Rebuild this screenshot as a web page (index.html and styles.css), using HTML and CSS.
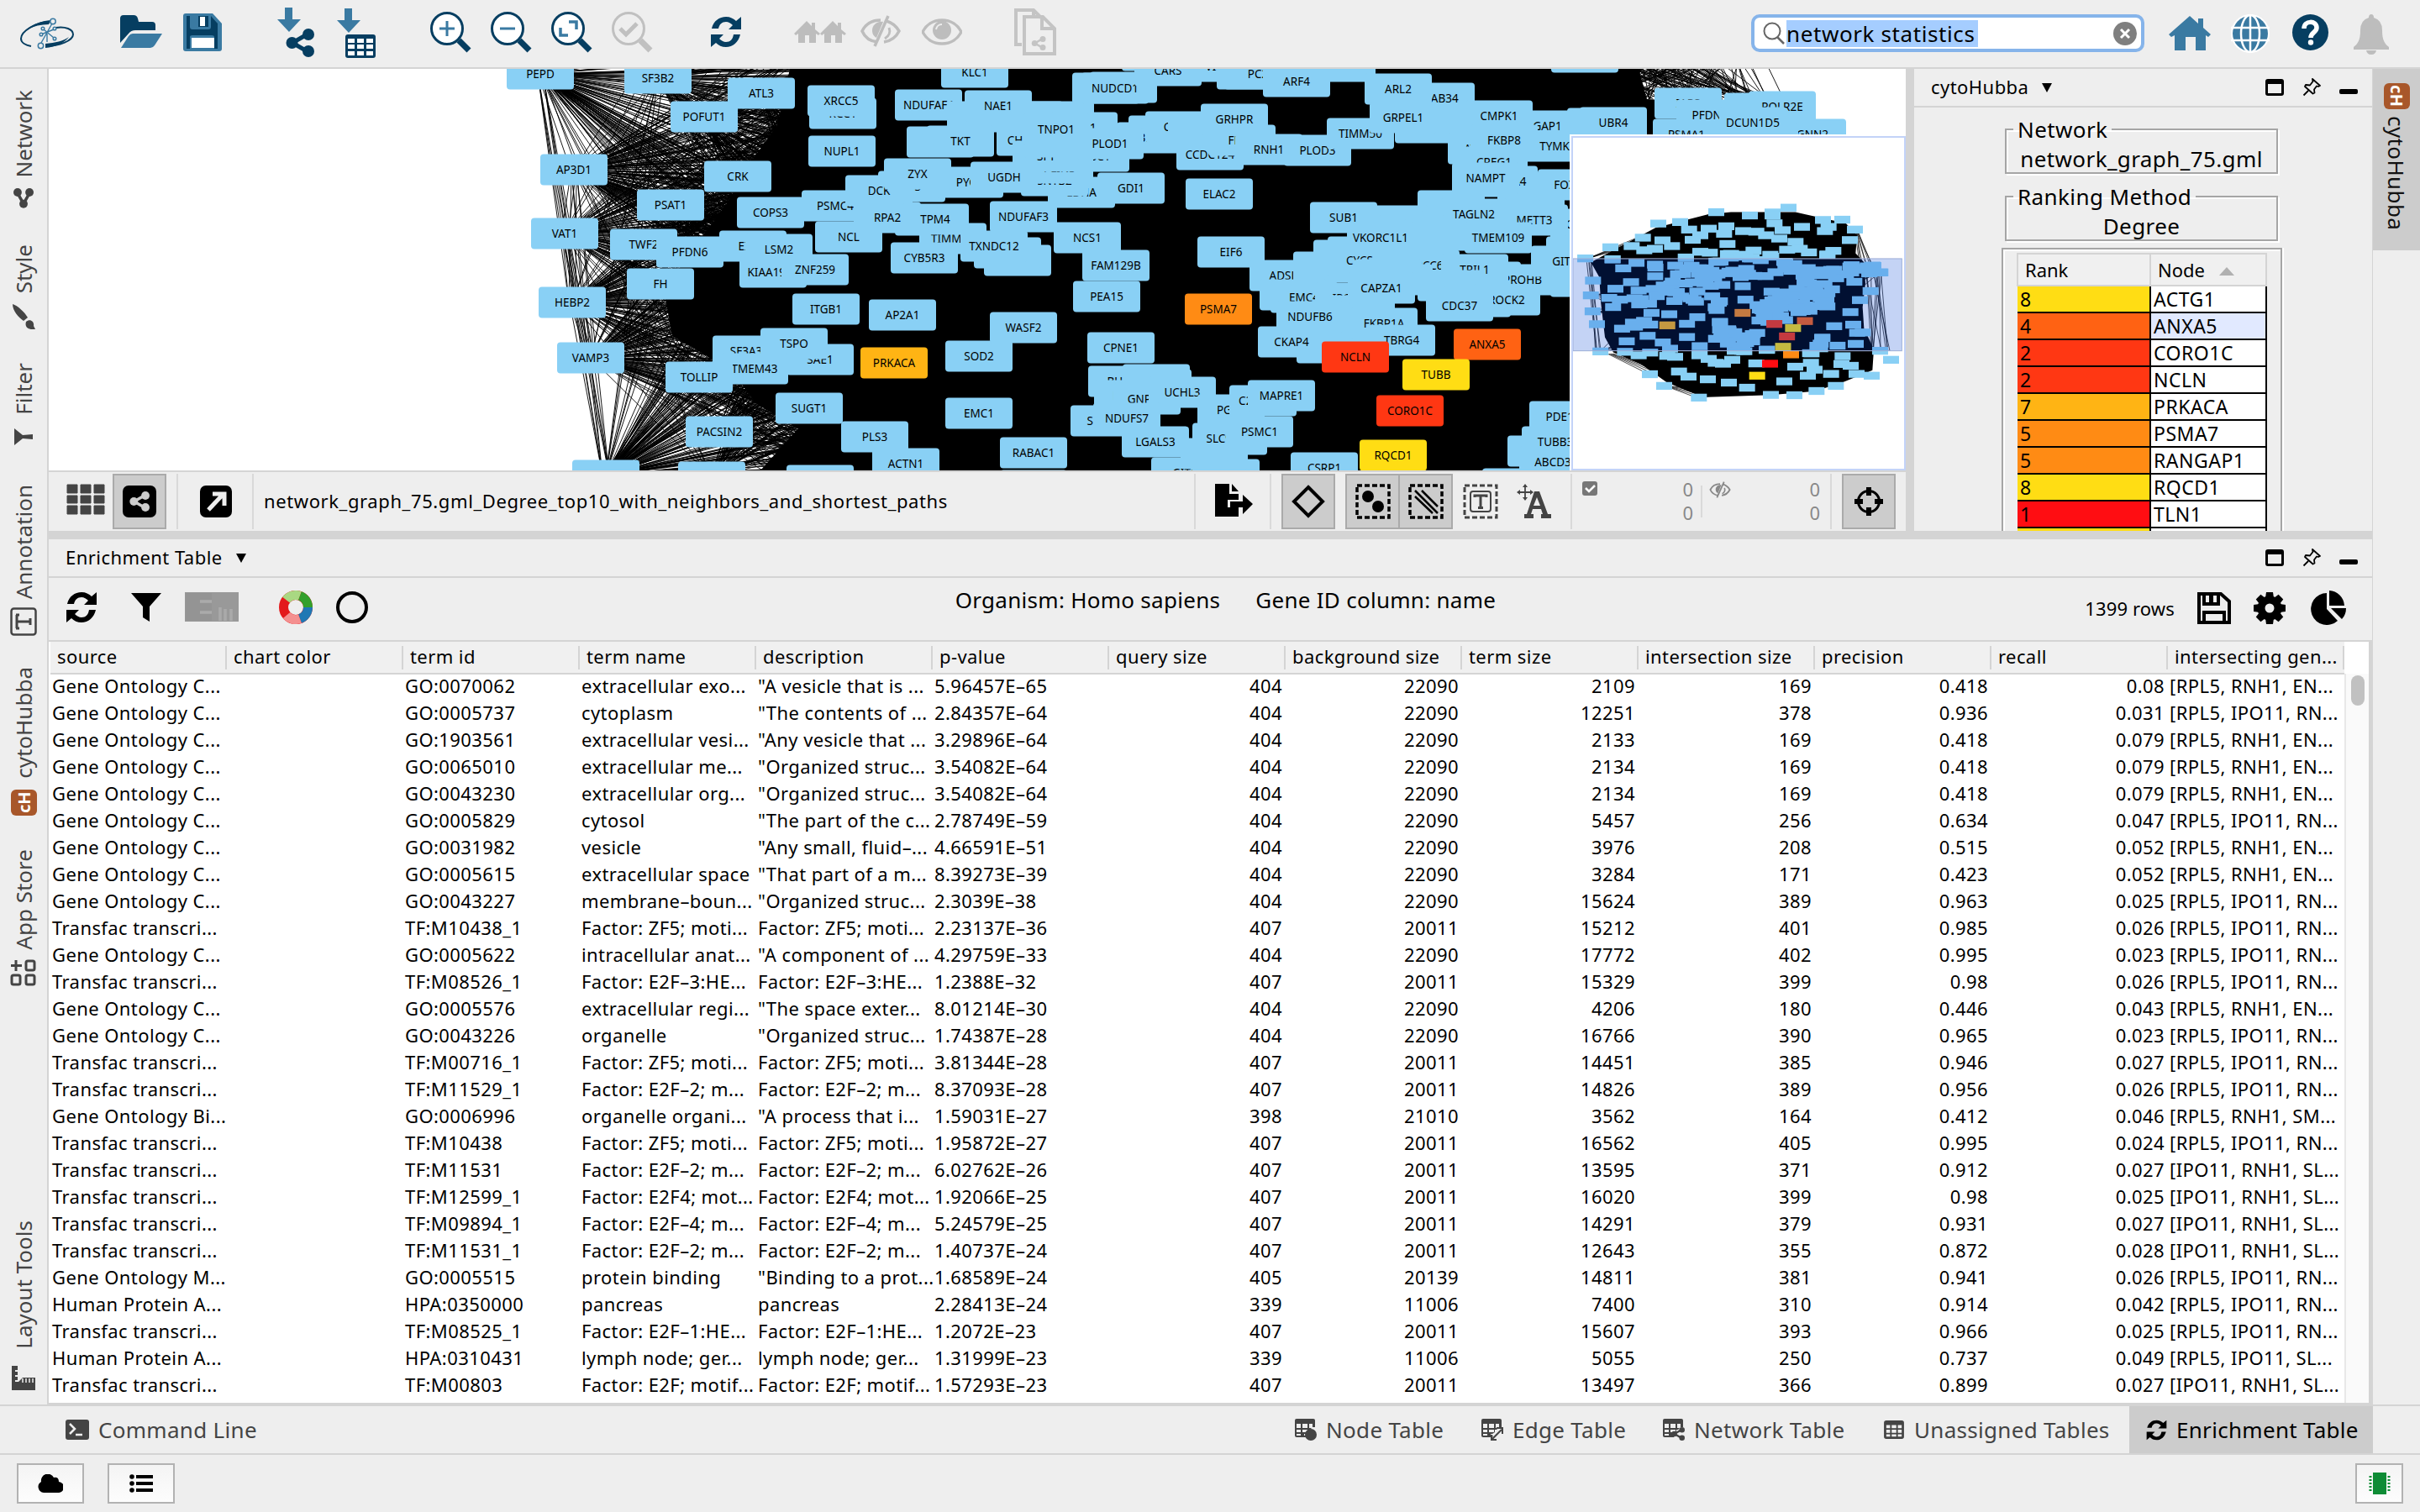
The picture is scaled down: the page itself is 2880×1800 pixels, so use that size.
FILE: index.html
```html
<!DOCTYPE html>
<html lang="en">
<head>
<meta charset="utf-8">
<title>Cytoscape session</title>
<link rel="stylesheet" href="styles.css">
</head>
<body>
<svg class="defs" width="0" height="0">
  <symbol id="i-refresh" viewBox="0 0 38 38"><path d="M2 15C4 6 11 1 19 1c5 0 9 2 12 5l6-5v15H22l5-5c-2-2-5-4-8-4-5 0-8 3-9 8zM36 22c-2 9-9 15-17 15-5 0-9-2-12-5l-6 5V22h15l-5 5c2 2 5 4 8 4 5 0 8-3 9-9z"/></symbol>
  <symbol id="i-eye" viewBox="0 0 48 32"><path d="M24 2C13 2 5 8 1 16c4 8 12 14 23 14s19-6 23-14C43 8 35 2 24 2z" fill="none" stroke="currentColor" stroke-width="3.5"/><circle cx="24" cy="14" r="11"/><path d="M17 13a7 7 0 0 1 7-6" fill="none" stroke="#eee" stroke-width="2"/></symbol>
  <symbol id="i-eyeoff" viewBox="0 0 48 38"><path d="M20 32C11 31 5 26 2 19 6 11 14 6 24 6M31 7c7 2 12 7 15 12-4 8-11 12-18 13" fill="none" stroke="currentColor" stroke-width="3.5"/><path d="M27 8c-7-1-13 4-13 10 0 5 2 7 5 9z"/><path d="M33 1 17 37" stroke="currentColor" stroke-width="3.5"/><path d="M29 28c5-3 7-8 5-13" fill="none" stroke="currentColor" stroke-width="3"/></symbol>
  <symbol id="i-share" viewBox="0 0 34 34"><path d="M27 6 8 17l19 11" fill="none" stroke="currentColor" stroke-width="5"/><circle cx="27" cy="7" r="7"/><circle cx="7.500" cy="17" r="7"/><circle cx="27" cy="27" r="7"/></symbol>
  <symbol id="i-max" viewBox="0 0 22 20"><path d="M3 0h16q3 0 3 3v14q0 3-3 3H3q-3 0-3-3V3q0-3 3-3zM3 6v11h16V6z" fill-rule="evenodd"/></symbol>
  <symbol id="i-pin" viewBox="0 0 22 22"><path d="M12 1l9 8-2 1-2-.5-3 4 .5 4-2 1L3 10l1-2 5 .5 3.500-4.500zM7 15 1.500 20.500" fill="none" stroke="currentColor" stroke-width="1.800" stroke-linejoin="round"/></symbol>
  <symbol id="i-table" viewBox="0 0 26 24"><path fill-rule="evenodd" d="M3 0h20q3 0 3 3v18q0 3-3 3H3q-3 0-3-3V3q0-3 3-3zM3 6v4h5V6zm7 0v4h6V6zm8 0v4h5V6zM3 12v4h5v-4zm7 0v4h6v-4zm8 0v4h5v-4zM3 18v3h5v-3zm7 0v3h6v-3zm8 0v3h5v-3z"/></symbol>
  <symbol id="i-grid" viewBox="0 0 26 26"><path d="M2 0h20q2 0 2 2v8h-3V6h-4v5h3l-2 2h-2v3l-3 2h-2v2h3l-1 2H2q-2 0-2-2V2q0-2 2-2zM2 6v5h5V6zm7 0v5h6V6zM2 13v3h5v-3zm7 0v3h6v-3zM2 18v2h5v-2z" fill-rule="evenodd"/></symbol>
</svg>

<div class="app">
  <header class="toolbar">
    <svg width="110" height="80" viewBox="0 0 110 80"><path d="M60 25C42 27 25 37 25 46c0 5 6 8 12 9" fill="none" stroke="#063e61" stroke-width="2"/><path d="M32 35C40 28 50 25 60 25l-2 4c-9 0-18 2-26 6z" fill="#063e61"/><path d="M66 33c12-2 21 2 21 8 0 7-16 14-33 14" fill="none" stroke="#063e61" stroke-width="2"/><path d="M54 52c12-1 21-3 28-8-5 7-16 12-28 13z" fill="#063e61"/><path d="M62 28 49 51M52 35l12 10M64 35l-15 6M56 40v10" stroke="#3a7aa2" stroke-width="1.400"/><g fill="#eee" stroke="#3a7aa2" stroke-width="1.500"><circle cx="63" cy="25.500" r="3.200"/><circle cx="48.500" cy="54.500" r="3.200"/><circle cx="51" cy="34" r="1.800"/><circle cx="65" cy="34" r="1.800"/><circle cx="65" cy="46" r="1.800"/><circle cx="49" cy="41" r="1.800"/></g></svg>
    <svg width="90" height="80" viewBox="110 0 90 80"><path d="M143 51V22q0-4 4-4h12q4 0 5 4l1 4h16q4 0 4 4v6h-24q-5 0-8 4z" fill="#063e61"/><path d="M144 57l9-14q2-3 5-3h35l-9 14q-2 3-5 3z" fill="#3a7aa2"/></svg>
    <svg width="90" height="80" viewBox="200 0 90 80"><path d="M221 16h32l11 12v30q0 3-3 3h-40q-3 0-3-3V19q0-3 3-3z" fill="#3a7aa2"/><path d="M222 19h4v13q0 3 3 3h19q3 0 3-3V19l8 9v30h-4V44q0-2-3-2h-23q-3 0-3 2v14h-4z" fill="#063e61"/><path d="M236 19h12v13h-12z" fill="#063e61"/><path d="M238 20h6v11h-6zM228 45h27v12h-27z" fill="#fff"/></svg>
    <svg width="95" height="80" viewBox="290 0 95 80"><path d="M339 9h9v14h10l-14 15-14-15h9z" fill="#3a7aa2"/><use href="#i-share" x="340" y="34" width="34" height="34" fill="#063e61" color="#063e61"/></svg>
    <svg width="115" height="80" viewBox="385 0 115 80"><path d="M410 10h9v14h10l-14 15-14-15h9z" fill="#3a7aa2"/><path fill="#063e61" d="M414 41h30q3 0 3 3v22q0 3-3 3h-30q-3 0-3-3V44q0-3 3-3z"/><path fill="#fff" d="M414 46h8v5h-8zm11 0h8v5h-8zm11 0h8v5h-8zM414 53h8v5h-8zm11 0h8v5h-8zm11 0h8v5h-8zM414 61h8v5h-8zm11 0h8v5h-8zm11 0h8v5h-8z"/></svg>
    <svg width="72" height="80" viewBox="500 0 72 80"><g fill="none" stroke="#063e61"><path d="M546 48l12 12" stroke-width="7"/><circle cx="532" cy="34" r="18.500" stroke-width="3" fill="#fff"/></g><path d="M532 25v18M523 34h18" stroke="#3a7aa2" stroke-width="3"/></svg>
    <svg width="72" height="80" viewBox="572 0 72 80"><g fill="none" stroke="#063e61"><path d="M618 48l12 12" stroke-width="7"/><circle cx="604" cy="34" r="18.500" stroke-width="3" fill="#fff"/></g><path d="M595 34h18" stroke="#3a7aa2" stroke-width="3"/></svg>
    <svg width="72" height="80" viewBox="644 0 72 80"><g fill="none" stroke="#063e61"><path d="M690 48l12 12" stroke-width="7"/><circle cx="676" cy="34" r="18.500" stroke-width="3" fill="#fff"/></g><path d="M677 26h9v9M667 33v9h9" fill="none" stroke="#3a7aa2" stroke-width="3.500"/></svg>
    <svg width="84" height="80" viewBox="716 0 84 80"><g fill="none" stroke="#c0c0c0"><path d="M762 48l12 12" stroke-width="7"/><circle cx="748" cy="34" r="18.500" stroke-width="3"/><path d="M738 34l7 7 13-13" stroke-width="5"/></g></svg>
    <svg width="130" height="80" viewBox="800 0 130 80"><use href="#i-refresh" x="845" y="19" width="38" height="38" fill="#063e61"/></svg>
    <svg width="85" height="80" viewBox="930 0 85 80"><path fill="#bdbdbd" d="M945 40l15-15 6 6v-4h4v8l6 5-2 2-3-2v11h-8v-9h-5v9h-8V40l-3 2zM976 40l15-15 6 6v-4h4v8l6 5-2 2-3-2v11h-8v-9h-5v9h-8V40l-3 2z"/></svg>
    <svg width="69" height="80" viewBox="1015 0 69 80"><use href="#i-eyeoff" x="1024" y="18" width="48" height="38" fill="#bdbdbd" color="#bdbdbd"/></svg>
    <svg width="76" height="80" viewBox="1084 0 76 80"><use href="#i-eye" x="1097" y="22" width="48" height="32" fill="#bdbdbd" color="#bdbdbd"/></svg>
    <svg width="120" height="80" viewBox="1160 0 120 80"><g fill="none" stroke="#c4c4c4" stroke-width="4"><path d="M1216 53h-7V12h21l9 9M1219 20h22l14 14v30h-36z"/><path d="M1230 12v7M1240 20v14h14"/></g><use href="#i-share" x="1227" y="43" width="18" height="17" fill="#c4c4c4" color="#c4c4c4"/></svg>
    <div class="search">
      <svg width="28" height="30" viewBox="0 0 28 30"><circle cx="12" cy="12" r="9.500" fill="none" stroke="#666" stroke-width="2"/><path d="M18 19l8 8" stroke="#666" stroke-width="2.500"/></svg>
      <span class="search-text">network statistics</span>
      <svg class="clear" width="28" height="28" viewBox="0 0 28 28"><circle cx="14" cy="14" r="14" fill="#7f7f7f"/><path d="M9 9l10 10M19 9 9 19" stroke="#fff" stroke-width="3"/></svg>
    </div>
    <svg width="90" height="80" viewBox="2560 0 90 80"><path fill="#3a7aa2" d="M2581 41l25-22 10 9v-6h6v11l9 8-3 3-3-2v18h-12V44h-12v16h-13V42l-4 2z"/></svg>
    <svg width="65" height="80" viewBox="2650 0 65 80"><circle cx="2678" cy="40" r="23" fill="#fff"/><circle cx="2678" cy="40" r="21" fill="#3a7aa2"/><path d="M2655 33h46M2655 48h46M2678 17v46" stroke="#fff" stroke-width="2.500"/><ellipse cx="2678" cy="40" rx="11" ry="22" fill="none" stroke="#fff" stroke-width="2.500"/></svg>
    <svg width="70" height="80" viewBox="2715 0 70 80"><circle cx="2749.500" cy="38.500" r="21.500" fill="#063e61"/><path d="M2742 34c0-10 15-10 15-1 0 6-7 5-7 12" fill="none" stroke="#fff" stroke-width="5.500"/><circle cx="2750" cy="50.500" r="3.200" fill="#fff"/></svg>
    <svg width="90" height="80" viewBox="2785 0 90 80"><path fill="#bdbdbd" d="M2822 17q3 0 3 4 10 3 10 15c0 12 3 16 8 20v3h-42v-3c5-4 8-8 8-20q0-12 10-15 0-4 3-4zM2816 60h12q-1 5-6 5t-6-5z"/></svg>
  </header>

  <div class="body">
    <nav class="side left">
      <div class="vtab t1"><span>Network</span><svg width="24" height="24" fill="#444" color="#444"><use href="#i-share" width="24" height="24" transform="rotate(-90 12 12)"/></svg></div>
      <div class="vtab t2"><span>Style</span><svg width="30" height="30" viewBox="0 0 30 30" fill="#444"><path d="M2 0c6 2 14 9 18 16l-5 4C9 16 2 8 2 0zM18 21c5-4 10 0 9 5l2 4c-8 1-13-2-11-9z"/></svg></div>
      <div class="vtab t3"><span>Filter</span><svg width="24" height="22" viewBox="0 0 24 22" fill="#444"><path d="M1 1v20l10-8 12 1v-6l-12 1z"/></svg></div>
      <div class="vtab t4"><span>Annotation</span><svg width="32" height="34" viewBox="0 0 32 34" fill="none" stroke="#444"><rect x="1.500" y="1.500" width="29" height="31" rx="3" stroke-width="2.500"/><path d="M7 17h18M8 9v16M24 13v8M7 9h4M7 25h4" stroke-width="3"/></svg></div>
      <div class="vtab t5"><span>cytoHubba</span><b class="ch">cH</b></div>
      <div class="vtab t6"><span>App Store</span><svg width="32" height="32" viewBox="0 0 32 32" fill="none" stroke="#444" stroke-width="3"><rect x="2" y="19" width="10" height="11" rx="2"/><rect x="19" y="19" width="10" height="11" rx="2"/><rect x="19" y="2" width="10" height="11" rx="2"/><path d="M7 1v13M1 7.500h13"/></svg></div>
      <div class="vtab t7"><span>Layout Tools</span><svg width="28" height="30" viewBox="0 0 28 30" fill="#444"><path d="M0 1h7v5H4v2h3v4H4v2h3v4H4v2h4l5-5h15v15H0z"/><path d="M13 16v5M17 16v5M21 16v5M25 16v5" stroke="#eee" stroke-width="1.500"/></svg></div>
    </nav>

    <main class="center">
      <div class="upper">
        <section class="netview">
          <div class="canvas">
            <svg id="network" width="2210" height="478" viewBox="58 82 2210 478"></svg>
            <div class="overview"><svg id="overview" width="394" height="394" viewBox="36 235 1182 1103" preserveAspectRatio="none"></svg></div>
          </div>
          <div class="netbar">
            <svg width="76" height="70" viewBox="58 562 76 70" fill="#444"><path d="M80 577h12v10H80zm16 0h12v10H96zm16 0h12v10h-12zM80 590h12v9H80zm16 0h12v9H96zm16 0h12v9h-12zM80 602h12v10H80zm16 0h12v10H96zm16 0h12v10h-12z" stroke="#444" stroke-linejoin="round"/></svg>
            <div class="btn on w64"><svg width="40" height="38" viewBox="0 0 40 38"><rect width="40" height="38" rx="7"/><use href="#i-share" x="8" y="7" width="24" height="24" fill="#ccc" color="#ccc"/></svg></div>
            <i class="sep l12"></i>
            <svg class="l26" width="38" height="38" viewBox="0 0 38 38"><rect width="38" height="38" rx="7"/><path d="M10 29 26 12M15 10h14v14" fill="none" stroke="#eee" stroke-width="5"/></svg>
            <i class="sep l24"></i>
            <span class="netname">network_graph_75.gml_Degree_top10_with_neighbors_and_shortest_paths</span>
            <i class="sep push"></i>
            <svg width="88" height="70" viewBox="1424 562 88 70"><path d="M1447 576h17v12h11v7h-13v9h13v11h-28zM1467 576l8 9h-8zM1465 597h15v-8l12 11-12 12v-8h-15z"/></svg>
            <i class="sep"></i>
            <div class="btn on w64 l12"><svg width="42" height="42" viewBox="0 0 42 42"><path d="M21 4 38 21 21 38 4 21z" fill="none" stroke="#000" stroke-width="4"/></svg></div>
            <div class="btn on w65 l12"><svg width="42" height="42" viewBox="0 0 42 42"><rect x="2" y="2" width="38" height="38" fill="none" stroke="#000" stroke-width="3.500" stroke-dasharray="6 3"/><circle cx="15" cy="15" r="7"/><circle cx="27" cy="27" r="7"/></svg></div>
            <div class="btn on w65 join"><svg width="42" height="42" viewBox="0 0 42 42"><rect x="2" y="2" width="38" height="38" fill="none" stroke="#000" stroke-width="3.500" stroke-dasharray="6 3"/><path d="M8 15l21 20M8 8l27 27M16 8l19 19" stroke="#000" stroke-width="2.500"/></svg></div>
            <svg class="l12" width="42" height="42" viewBox="0 0 42 42" fill="none" stroke="#444"><rect x="2" y="2" width="38" height="38" stroke-width="3" stroke-dasharray="6 3"/><rect x="9" y="9" width="24" height="24" rx="3" stroke-width="2"/><path d="M14 16v-2h14v2M21 14v14M18 28.500h6" stroke-width="3"/></svg>
            <svg class="l22" width="44" height="42" viewBox="0 0 44 42" fill="#444"><path fill-rule="evenodd" d="M21 9h6l10 27h4v5H29v-5h2l-2-6H19l-2 6h3v5H9v-5h3zM24 16l-4 10h8z"/><path d="M10 1v18M1 10h18" stroke="#444" stroke-width="1.800"/><path d="M10 0l3 4H7zM10 20l3-4H7zM0 10l4-3v6zM20 10l-4-3v6z"/></svg>
            <i class="sep l20"></i>
            <div class="counts c1"><svg width="18" height="18" viewBox="0 0 18 18"><rect width="18" height="17" rx="3" fill="#777"/><path d="M4 8l4 4 7-7" fill="none" stroke="#fff" stroke-width="2.500"/></svg><span>0<br>0</span></div>
            <i class="sep short"></i>
            <div class="counts c2"><svg width="26" height="20" fill="#888" color="#888"><use href="#i-eyeoff" width="26" height="20"/></svg><span>0<br>0</span></div>
            <i class="sep l12"></i>
            <div class="btn on w64 locate"><svg width="36" height="36" viewBox="0 0 36 36" fill="none" stroke="#000"><circle cx="18" cy="18" r="12.500" stroke-width="3"/><path d="M18 1v10M18 25v10M1 18h10M25 18h10" stroke-width="6"/></svg></div>
          </div>
        </section>

        <aside class="hub">
          <div class="phead"><span>cytoHubba</span><i class="tri"></i>
            <svg class="push" width="22" height="20"><use href="#i-max" width="22" height="20"/></svg><svg width="22" height="22"><use href="#i-pin" width="22" height="22"/></svg><i class="min"></i></div>
          <fieldset class="f1"><legend>Network</legend>network_graph_75.gml</fieldset>
          <fieldset class="f2"><legend>Ranking Method</legend>Degree</fieldset>
          <div class="rankbox"><table class="rank">
            <thead><tr><th>Rank</th><th>Node <i class="up"></i></th></tr></thead>
            <tbody>
              <tr><td class="y">8</td><td>ACTG1</td></tr>
              <tr><td class="o4">4</td><td class="hov">ANXA5</td></tr>
              <tr><td class="r2">2</td><td>CORO1C</td></tr>
              <tr><td class="r2">2</td><td>NCLN</td></tr>
              <tr><td class="o7">7</td><td>PRKACA</td></tr>
              <tr><td class="o5">5</td><td>PSMA7</td></tr>
              <tr><td class="o5">5</td><td>RANGAP1</td></tr>
              <tr><td class="y">8</td><td>RQCD1</td></tr>
              <tr><td class="r1">1</td><td>TLN1</td></tr>
              <tr><td class="y"></td><td></td></tr>
            </tbody></table></div>
        </aside>
      </div>

      <section class="enrich">
        <div class="phead e"><span>Enrichment Table</span><i class="tri"></i>
          <svg class="push" width="22" height="20"><use href="#i-max" width="22" height="20"/></svg><svg width="22" height="22"><use href="#i-pin" width="22" height="22"/></svg><i class="min"></i></div>
        <div class="ebar">
          <div class="eicons">
            <svg width="38" height="38"><use href="#i-refresh" width="38" height="38"/></svg>
            <svg width="36" height="36" viewBox="0 0 36 36"><path d="M0 1h36L22 17v18l-8-5V17z"/></svg>
            <svg class="em" width="64" height="35" viewBox="0 0 64 35"><rect width="64" height="35" fill="#999"/><path d="M1 1h31v33H1z" fill="#949494"/><path d="M18 11h14M18 24h14M42 18v16M48 20v14M55 20v14" stroke="#aaa" stroke-width="3.500"/></svg>
            <svg class="donut" width="40" height="40" viewBox="0 0 40 40" fill="none" stroke-width="11"><circle cx="20" cy="20" r="14.500" stroke="#e31a1c"/><path d="M8.500 11.200A14.500 14.500 0 0 1 25 6.400" stroke="#a9d882"/><path d="M25 6.400A14.500 14.500 0 0 1 34.500 20" stroke="#33a02c"/><path d="M34.500 20A14.500 14.500 0 0 1 25 33.600" stroke="#1f78b4"/><path d="M25 33.600A14.500 14.500 0 0 1 9 29.500" stroke="#f48f8f"/></svg>
            <svg class="ring" width="38" height="38" viewBox="0 0 38 38"><circle cx="19" cy="19" r="17" fill="none" stroke="#000" stroke-width="4"/></svg>
          </div>
          <div class="etitle"><span>Organism: Homo sapiens</span><span>Gene ID column: name</span></div>
          <div class="eright"><span>1399 rows</span>
            <svg class="s1" width="40" height="38" viewBox="0 0 40 38"><path d="M2 2h26l10 9v25H2zM8 2v12h17V2M8 36V24h24v12" fill="none" stroke="#000" stroke-width="4"/><path d="M14 2h5v10h-5z"/></svg>
            <svg class="s2" width="38" height="38" viewBox="-19 -19 38 38"><circle r="10" fill="none" stroke="#000" stroke-width="9"/><g><path id="tooth" d="M-4-19h8l1 7H-5z"/><use href="#tooth" transform="rotate(45)"/><use href="#tooth" transform="rotate(90)"/><use href="#tooth" transform="rotate(135)"/><use href="#tooth" transform="rotate(180)"/><use href="#tooth" transform="rotate(225)"/><use href="#tooth" transform="rotate(270)"/><use href="#tooth" transform="rotate(315)"/></g></svg>
            <svg class="s3" width="44" height="41" viewBox="0 0 44 41"><path d="M20 3v19l13 14A19 19 0 1 1 20 3zM23 0a19 19 0 0 1 18 18H23zM25 21h18q0 8-5 13z"/></svg>
          </div>
        </div>
        <div class="grid">
          <table class="terms"><thead><tr><th>source</th><th>chart color</th><th>term id</th><th>term name</th><th>description</th><th>p-value</th><th>query size</th><th>background size</th><th>term size</th><th>intersection size</th><th>precision</th><th>recall</th><th>intersecting gen...</th></tr></thead><tbody id="rows"></tbody></table>
          <div class="scroll"><i></i></div>
        </div>
      </section>
    </main>

    <nav class="side right"><div class="rtab"><b class="ch">cH</b><span>cytoHubba</span></div></nav>
  </div>

  <footer class="tabs">
    <div class="tab cmd"><svg width="28" height="24" viewBox="0 0 28 24"><rect width="28" height="24" rx="3" fill="#444"/><path d="M5 5l6 6-6 6M12 18h8" fill="none" stroke="#eee" stroke-width="2.500"/></svg>Command Line</div>
    <div class="tab tn"><svg width="26" height="26" fill="#444"><use href="#i-grid" width="26" height="26"/><circle cx="19" cy="19" r="7"/></svg>Node Table</div>
    <div class="tab te"><svg width="26" height="26" fill="#444"><use href="#i-grid" width="26" height="26"/><path d="M13 24 24 13M18 11h7v7M12 19v6h6" stroke="#444" stroke-width="2" fill="none"/></svg>Edge Table</div>
    <div class="tab tw"><svg width="26" height="26" fill="#444" color="#444"><use href="#i-grid" width="26" height="26"/><use href="#i-share" x="10" y="10" width="16" height="16"/></svg>Network Table</div>
    <div class="tab tu"><svg width="26" height="22" fill="#444"><use href="#i-table" width="26" height="22"/></svg>Unassigned Tables</div>
    <div class="tab cur"><svg width="25" height="25"><use href="#i-refresh" width="25" height="25"/></svg>Enrichment Table</div>
  </footer>
  <div class="status">
    <div class="sbtn"><svg width="30" height="22" viewBox="0 0 30 22"><path d="M7 22a7 7 0 0 1-3-13A8 8 0 0 1 19 4q6-1 6 5a6.500 6.500 0 0 1-1 13z"/></svg></div>
    <div class="sbtn b2"><svg width="28" height="22" viewBox="0 0 28 22"><path d="M8 1h20v4H8zm0 8h20v4H8zm0 8h20v4H8z"/><circle cx="3" cy="3" r="2.800"/><circle cx="3" cy="11" r="2.800"/><circle cx="3" cy="19" r="2.800"/></svg></div>
    <div class="sbtn mem"><svg width="26" height="28" viewBox="0 0 26 28"><rect x="5" y="1" width="16" height="26" fill="#0e8c35"/><path d="M2 5v20M24 5v20" stroke="#0e8c35" stroke-width="3" stroke-dasharray="2 2"/></svg></div>
  </div>
</div>
<script src="app.js"></script>
</body>
</html>
```
FILE: styles.css
```css
* { box-sizing: border-box; }
body { margin: 0; background: #eee; color: #000; font: 22px/1 "Noto Sans", "Open Sans", sans-serif; }
svg { display: block; flex: none; }
.defs { position: absolute; }
.app { width: 2880px; height: 1800px; display: flex; flex-direction: column; overflow: hidden; white-space: nowrap; }
.push { margin-left: auto !important; }

/* main toolbar */
.toolbar { height: 82px; border-bottom: 2px solid #d4d4d4; display: flex; }
.search { margin: 17px 8px 0 804px; width: 468px; height: 45px; border: 4px solid #86b4ea; border-radius: 10px; background: #fff; display: flex; align-items: center; padding: 0 5px 0 9px; }
.search-text { background: #a5cdff; font-size: 26px; line-height: 32px; width: 228px; letter-spacing: .6px; margin-left: 1px; }
.search .clear { margin-left: auto; }

.body { height: 1592px; display: flex; }

/* vertical tabs */
.side { width: 58px; color: #444; font-size: 26px; }
.left { border-right: 2px solid #d4d4d4; display: flex; flex-direction: column; padding-top: 25px; }
.vtab { display: flex; flex-direction: column; justify-content: space-between; align-items: center; flex: none; }
.vtab span { writing-mode: vertical-rl; transform: rotate(180deg); line-height: 36px; }
.t1 { height: 141px; margin-bottom: 43px; } .t2 { height: 101px; margin-bottom: 40px; } .t3 { height: 99px; margin-bottom: 46px; }
.t4 { height: 180px; margin-bottom: 37px; } .t5 { height: 177px; margin-bottom: 40px; } .t6 { height: 163px; } .t7 { height: 202px; margin-top: 279px; }
.ch { background: #a8572a; color: #fff; width: 31px; height: 31px; border-radius: 6px; writing-mode: vertical-rl; font-size: 20px; line-height: 31px; text-align: center; }
.left .ch { transform: rotate(180deg); }
.right { width: 56px; }
.rtab { background: #ccc; height: 216px; display: flex; flex-direction: column; align-items: center; padding-top: 17px; gap: 8px; color: #111; letter-spacing: .4px; }
.rtab span { writing-mode: vertical-rl; line-height: 36px; }

.center { width: 2766px; display: flex; flex-direction: column; border-right: 1px solid #d4d4d4; }
.upper { height: 560px; display: flex; border-bottom: 10px solid #d4d4d4; }

/* network view */
.netview { width: 2220px; border-right: 10px solid #d4d4d4; }
.canvas { height: 480px; border-bottom: 2px solid #d4d4d4; background: #fff; position: relative; overflow: hidden; }
.overview { position: absolute; right: 0; bottom: 0; border: 2px solid #c3d3f8; outline: 2px solid #fff; background: #fff; }
#network text { font: 13.5px "Noto Sans", sans-serif; text-anchor: middle; }
.netbar { height: 70px; display: flex; align-items: center; }
.btn { height: 66px; display: flex; align-items: center; justify-content: center; background: #ccc; border: 2px solid #aaa; }
.w64 { width: 64px; } .w65 { width: 65px; } .join { margin-left: -2px; }
.locate { margin: 0 12px 0 12px; }
.sep { width: 2px; height: 66px; background: #d9d9d9; }
.sep.short { height: 38px; margin-left: 9px; }
.l12 { margin-left: 12px; } .l20 { margin-left: 20px; } .l22 { margin-left: 22px; } .l24 { margin-left: 24px; } .l26 { margin-left: 26px; }
.netname { margin: -3px 0 0 12px; letter-spacing: .6px; }
.counts { display: flex; justify-content: space-between; align-items: flex-start; color: #888; line-height: 28px; height: 59px; }
.counts svg { margin-top: 5px; }
.c1 { width: 132px; margin-left: 12px; } .c2 { width: 132px; margin-left: 8px; }

/* panels */
.phead { height: 46px; display: flex; align-items: center; border-bottom: 2px solid #d4d4d4; padding: 0 17px 0 20px; gap: 22px; letter-spacing: .45px; }
.phead span { margin-top: -2px; }
.tri { border: 6px solid transparent; border-top: 11px solid #000; border-bottom: 0; margin-left: -6px; }
.min { width: 22px; height: 6px; border-radius: 2px; background: #000; margin-top: 10px; }
.hub { width: 545px; overflow: hidden; }
.hub fieldset { margin: 0 0 0 108px; padding: 0; width: 325px; height: 70px; border: 2px solid #a5a5a5; box-shadow: inset 2px 2px #fff, 2px 2px #fff; font-size: 26px; line-height: 36px; text-align: center; letter-spacing: .4px; }
.hub legend { padding: 0 5px; margin-left: 8px; line-height: 34px; text-align: left; }
.hub .f1 { margin-top: 9px; } .hub .f2 { margin-top: 10px; }
.rankbox { margin: 8px 0 0 104px; width: 334px; height: 400px; border: 2px solid #a5a5a5; box-shadow: inset 2px 2px #fff, 2px 0 #fff; padding: 4px 0 0 16px; }
.rank { border-collapse: collapse; table-layout: fixed; width: 298px; }
.rank th { height: 38px; background: #f0f0f0; border: 2px solid #d4d4d4; font-weight: 400; text-align: left; padding: 0 0 1px 8px; }
.rank td { height: 32px; border: 2px solid #000; border-left: 0; background: #fff; padding: 0 0 0 3px; font-size: 23px; letter-spacing: .5px; }
.rank thead th:first-child { width: 158px; }
.rank tr:first-child td { border-top: 0; }
.up { display: inline-block; border: 9px solid transparent; border-bottom: 10px solid #b0b0b0; border-top: 0; margin: 0 0 2px 11px; }
.rank .y { background: #ffdd14; } .rank .o4 { background: #ff6213; } .rank .r2 { background: #ff3713; } .rank .o7 { background: #ffb414; } .rank .o5 { background: #ff8b14; } .rank .r1 { background: #ff0d12; } .rank .hov { background: #e1e9ff; }

/* enrichment table */
.enrich { flex: 1; display: flex; flex-direction: column; border-bottom: 4px solid #d4d4d4; }
.ebar { height: 76px; border-bottom: 2px solid #d4d4d4; display: grid; grid-template-columns: 1fr auto 1fr; align-items: center; }
.eicons { display: flex; align-items: center; padding-left: 20px; margin-top: -5px; }
.eicons svg + svg { margin-left: 40px; }
.eicons svg.em { margin-left: 28px; } .eicons svg.donut { margin-left: 48px; } .eicons svg.ring { margin-left: 28px; }
.etitle { display: flex; gap: 42px; font-size: 26px; margin: -22px 0 0 36px; letter-spacing: .28px; }
.eright { display: flex; align-items: center; justify-content: flex-end; padding-right: 30px; margin-top: -3px; letter-spacing: .15px; }
.eright .s1 { margin-left: 27px; } .eright .s2 { margin-left: 27px; } .eright .s3 { margin-left: 29px; }
.grid { display: flex; flex: 1; padding-left: 2px; background: #fff; border-right: 4px solid #d4d4d4; overflow: hidden; }
.terms { border-collapse: collapse; table-layout: fixed; width: 2730px; height: 0; font-size: 22px; letter-spacing: .42px; }
.terms th { font-weight: 400; text-align: left; padding: 0 0 3px 8px; height: 38px; background: linear-gradient(#d4d4d4, #d4d4d4) right center / 2px 28px no-repeat #f0f0f0; border-bottom: 2px solid #d4d4d4; }
.terms td { height: 32px; padding: 0 0 5px 2px; }
.terms .n { text-align: right; padding-right: 4px; }
.scroll { margin-top: 38px; flex: 1; background: #fafafa; border-left: 2px solid #e8e8e8; padding: 2px 0 0 6px; }
.scroll i { display: block; width: 16px; height: 36px; border-radius: 8px; background: #c1c1c1; }

/* bottom tabs and status bar */
.tabs { height: 60px; margin-top: -2px; border-top: 2px solid #d4d4d4; border-bottom: 2px solid #d4d4d4; display: flex; color: #444; font-size: 26px; letter-spacing: .3px; }
.tab { display: flex; align-items: center; gap: 11px; }
.cmd { margin-left: 78px; width: 1463px; } .tn { width: 222px; } .te { width: 216px; } .tw { width: 262px; } .tu { width: 293px; }
.cur { background: #ccc; color: #000; width: 290px; padding-left: 20px; }
.status { flex: 1; display: flex; padding: 10px 20px; }
.sbtn { width: 80px; height: 48px; border: 2px solid #b2b2b2; background: linear-gradient(#f4f4f4, #fdfdfd); display: flex; align-items: center; justify-content: center; }
.b2 { margin-left: 28px; }
.mem { width: 57px; margin-left: auto; }
```
FILE: app.js
```js
const LIGHT = '#89d0f5';

// Nodes in drawing order: x, y of the centre, label, fill. Later nodes cover earlier ones.
const nodes = [
[643,88,'PEPD'],[783,93,'SF3B2'],[906,111,'ATL3'],[838,139,'POFUT1'],[1003,135,'RCC1'],[1001,120,'XRCC5'],[1002,180,'NUPL1'],
[1160,86,'KLC1'],[1105,125,'NDUFAF4'],[1167,139,''],[1119,169,''],[1226,167,'CHCHD3'],[1143,168,'TKT'],[1262,139,''],[1225,139,''],[1188,126,'NAE1'],
[1290,152,'ISG1'],[1304,186,'UBC1'],[1287,229,'LDHA'],[1255,215,'SNTB2'],[1261,200,'PLIN3'],[1245,186,'SFT'],[1258,169,''],[1257,154,'TNPO1'],[1383,156,''],[1369,164,'UBE2L3'],[1321,171,'PLOD1'],
[683,202,'AP3D1'],[878,210,'CRK'],[798,244,'PSAT1'],[672,278,'VAT1'],[766,291,'TWF2'],[821,300,'PFDN6'],[896,293,'EIF3K'],[920,324,'KIAA1967'],[927,297,'LSM2'],[970,321,'ZNF259'],
[786,338,'FH'],[681,360,'HEBP2'],[983,368,'ITGB1'],[1074,375,'AP2A1'],[917,253,'COPS3'],[994,245,'PSMC4'],[1085,222,'ST3'],[1046,227,'DCK'],[1105,262,''],[1154,217,'PYGL'],[1195,211,'UGDH'],[1092,207,'ZYX'],
[1010,282,'NCL'],[1134,284,'TIMM44'],[1056,259,'RPA2'],[1113,261,'TPM4'],[1100,307,'CYB5R3'],[1211,310,'TARS'],[1199,301,''],[1218,258,'NDUFAF3'],[1183,293,'TXNDC12'],
[703,426,'VAMP3'],[888,418,'SF3A3'],[976,428,'SAE1'],[945,409,'TSPO'],[898,439,'TMEM43'],[832,449,'TOLLIP'],[1064,432,'PRKACA','#ffb414'],[1165,424,'SOD2'],[1218,390,'WASF2'],[963,486,'SUGT1'],[1165,492,'EMC1'],[856,514,'PACSIN2'],[1041,520,'PLS3'],[1078,552,'ACTN1'],[1230,578,''],[1230,539,'RABAC1'],[721,566,''],[847,568,''],[976,572,''],
[1346,224,'GDI1'],[1451,231,'ELAC2'],[1294,283,'NCS1'],[1328,316,'FAM129B'],[1317,353,'PEA15'],[1334,414,'CPNE1'],[1465,300,'EIF6'],[1450,368,'PSMA7','#ff8b14'],
[1316,105,''],[1337,104,''],[1327,105,'NUDCD1'],[1375,66,''],[1390,84,'CARS'],[1447,79,'VIM'],[1488,88,''],[1497,88,'PC2'],[1597,79,''],[1543,97,'ARF4'],
[1403,151,'CALM'],[1440,184,'CCDC124'],[1430,160,''],[1478,167,'FECH'],[1469,142,'GRHPR'],[1510,178,'RNH1'],[1568,179,'PLOD3'],
[1619,159,'TIMM50'],[1715,117,'RAB34'],[1664,106,'ARL2'],[1719,150,'KARS'],[1700,152,''],[1670,140,'GRPEL1'],
[1905,147,''],[1930,190,''],[1886,68,''],[1890,165,''],
[1763,177,'ATP5O'],[1834,150,'IQGAP1'],[1850,174,'TYMK'],[1784,138,'CMPK1'],[1778,193,'CREG1'],[1790,167,'FKBP8'],
[1822,238,''],[1790,216,'NDUFA4'],[1768,212,'NAMPT'],[1870,220,'FOXK1'],[1885,267,'COX5A'],[1727,245,''],[1826,262,'METT3'],[1754,255,'TAGLN2'],
[1599,259,'SUB1'],[1660,263,''],[1655,270,''],[1603,304,''],[1620,300,''],[1693,297,'CTTF'],[1680,275,''],[1710,280,''],[1643,283,'VKORC1L1'],[1880,300,''],[1885,335,''],[1770,330,''],
[1527,328,'ADSL'],[1579,318,''],[1618,310,'CYCS'],[1697,316,'XRCC6'],[1812,333,'PROHB'],[1862,311,'GIT2'],[1755,321,'TRIL1'],[1783,283,'TMEM109'],[1665,333,'ACSL1'],[1727,340,''],[1758,359,''],[1793,357,'ROCK2'],[1539,351,''],[1552,354,'EMC4'],[1605,355,'IPO11'],[1620,370,''],
[1583,414,''],[1605,398,''],[1647,385,'FKBP1A'],[1559,377,'NDUFB6'],[1652,327,''],[1644,343,'CAPZA1'],[1737,364,'CDC37'],[1668,405,'TBRG4'],[1537,407,'CKAP4'],
[1613,425,'NCLN','#ff3713'],[1770,410,'ANXA5','#ff6213'],[1709,446,'TUBB','#ffdd14'],[1678,489,'CORO1C','#ff3713'],[1576,557,'CSRP1'],[1658,542,'RQCD1','#ffdd14'],
[1335,454,'BUB3'],[1376,452,''],[1378,458,''],[1342,471,'EIF1B'],[1314,501,'SNX12'],[1365,475,'GNPDA'],[1407,467,'UCHL3'],[1341,498,'NDUFS7'],[1410,563,'GIT1'],[1375,526,'LGALS3'],[1459,565,'ERO1L'],[1445,540,''],[1468,523,''],[1465,488,'PGK1'],[1503,477,'C21orf33'],[1525,471,'MAPRE1'],[1459,522,'SLC9A3'],[1499,514,'PSMC1'],
[1804,576,''],[1860,496,'PDE12'],[1834,537,''],[1851,526,'TUBB3'],[1848,550,'ABCD3'],
[2009,123,'IARS'],[2092,129,''],[2121,127,'POLR2E'],[2007,160,'PSMA1'],[2035,137,'PFDN2'],[2157,160,'GNN2'],[2100,165,''],[2086,146,'DCUN1D5'],[1920,146,'UBR4']
];

// Nodes outside the main viewport, in overview units.
const outer = [[547,483],[667,494],[748,484],[748,494],[805,468],[340,521],[418,516],[928,509],[997,508],[1042,541],[1024,576],[755,520],[853,532],[948,532],[935,546],[784,543],[583,530],[520,538],[450,541],[575,555],[463,575],[490,560],[285,568],[169,600],[355,577],[389,596],[245,596],[328,605],[290,610],[587,589],[643,546],[690,548],[725,560],[772,571],[830,582],[800,608],[845,605],[878,617],[965,612],[943,625],[490,615],[524,618],[680,611],[600,622],[650,625],[740,625],[438,634],[177,640],
[555,648],[793,650],[1130,684],[1105,661],[1098,746],[1060,776],[1026,816],[968,863],[1036,858],[1050,885],[1070,884],[1045,922],[1132,945],[1010,690],[1040,715],[960,690],[925,902],[910,930],[980,928],[727,942],[1060,670],[1026,664],[960,740],[920,770],[560,850],[570,880],[600,900],[560,780],[545,800],
[270,960],[372,962],[400,965],[487,960],[520,972],[545,985],[604,975],[571,988],[690,987],[882,953],[998,963],[994,989],[1027,995],[1171,975],[829,998],[885,985],[898,1008],[874,1028],[957,1022],[1048,1022],[1102,1028],[310,1023],[361,1062],[414,1014],[448,1031],[517,1040],[592,1051],[657,1068],[790,1047],[742,1092],[826,1093],[905,1079],[974,1062],[485,1101],[640,945],
[739,988,'#ff0d12'],[693,1028,'#ffdd14'],[814,957,'#ff8b14']];

let seed = 7;
const rnd = () => (seed = (seed * 16807) % 2147483647) / 2147483647;
const line = (a, b, c, d) => `M${a.toFixed(1)} ${b.toFixed(1)}L${c.toFixed(1)} ${d.toFixed(1)}`;

function drawNetwork() {
  let d = '';
  // fans from the outermost nodes into the dense middle
  const hubs = [[643,88,130],[683,202,130],[672,278,110],[681,360,120],[703,426,120],[721,566,170],[783,93,90],[906,111,60],[838,139,70],[878,210,60],[798,244,60],[856,514,60],[832,449,70],[766,291,60],[847,568,70]];
  for (const [x, y, n] of hubs)
    for (let i = 0; i < n; i++) d += line(x + rnd() * 6 - 3, y, 1000 + rnd() * 350, -60 + rnd() * 720);
  // edges along the left rim
  const rim = [[643,88],[683,202],[672,278],[681,360],[703,426],[721,566]];
  for (const a of rim) for (const b of rim) if (a[1] < b[1])
    for (let k = -1; k < 2; k += 2) d += line(a[0] + k * 3, a[1], b[0] + k * 4, b[1]);
  for (const a of rim) for (const b of [[783,93],[838,139],[798,244],[766,291],[786,338],[832,449],[856,514],[847,568],[878,210],[900,20],[800,20]])
    d += line(a[0], a[1], b[0], b[1]);
  // edges leaving through the top right
  for (let i = 0; i < 130; i++) d += line(1880 + rnd() * 230, 118, 1820 + rnd() * 260, 60);
  for (let i = 0; i < 14; i++) d += line(2050 + rnd() * 80, 118, 1960 + rnd() * 130, 50);
  let s = '<path fill="#000" d="M940 82L925 150L895 190L870 235L830 290L790 345L800 400L870 440L900 480L950 510L905 560H1880V165H2080V125L1960 118L1950 82z"/>';
  s += `<path d="${d}" stroke="#000" stroke-width=".9" fill="none"/>`;
  for (const [x, y, t, f] of nodes) {
    s += `<rect x="${x - 40}" y="${y - 18.5}" width="80" height="37" rx="4" fill="${f || LIGHT}"/>`;
    if (t) s += `<text x="${x}" y="${y + 5}">${t}</text>`;
  }
  document.getElementById('network').innerHTML = s;
}

function drawOverview() {
  const box = (x, y, f) => `<rect x="${x - 28}" y="${y - 13}" width="57" height="26" fill="${f || LIGHT}"/>`;
  let d = '';
  const rim = [[79,637],[107,711],[100,760],[107,813],[121,857],[133,947],[169,600],[285,568],[310,1023],[361,1062],[485,1101],[1130,684],[1132,945],[1102,1028],[974,1062],[1042,541],[997,508],[340,521],[547,483]];
  for (const [x, y] of rim) for (let i = 0; i < 5; i++) d += line(x, y, 350 + rnd() * 550, 680 + rnd() * 220);
  for (let i = 0; i < 12; i++) d += line(1080 + rnd() * 60, 690, 1100 + rnd() * 68, 945);
  for (let i = 0; i < 8; i++) d += line(1042 + rnd() * 10, 541, 1060 + rnd() * 60, 670);
  for (let i = 0; i < 5; i++) d += line(85 + rnd() * 20, 650, 115 + rnd() * 20, 940) + line(160 + i * 5, 955, 300 + i * 20, 1020) + line(365, 1062, 480, 1070 + i * 8) + line(90, 637, 285, 560 + i * 6);
  let s = `<path d="M150 625L330 535L520 490L600 483H830L1010 520L1050 560L1045 620L1075 650L1080 720L1070 800L1075 870L1110 940L1105 1010L1000 1050L900 1080L742 1092L500 1100L370 1050L280 990L180 950L150 900L135 780L130 700L100 650z"/><path d="${d}" stroke="#000" stroke-width="2" fill="none"/>`;
  for (const [x, y, f] of outer) s += box(x, y, f);
  for (const [x, y, , f] of nodes) s += box(107 + (x - 683) * .696, 711 + (y - 202) * .6485, f);
  s += '<rect x="36" y="638" width="1174" height="307" fill="#0444d4" fill-opacity=".235" stroke="#9fb0d8" stroke-width="3"/>';
  document.getElementById('overview').innerHTML = s;
}

const C = 'Gene Ontology C...', T = 'Transfac transcri...', H = 'Human Protein A...';
const IPO = '[RPL5, IPO11, RN...', RNH = '[RPL5, RNH1, EN...', SL = '[IPO11, RNH1, SL...';
const terms = [
[C,'GO:0070062','extracellular exo...','"A vesicle that is ...','5.96457E-65',404,22090,2109,169,0.418,0.08,RNH],
[C,'GO:0005737','cytoplasm','"The contents of ...','2.84357E-64',404,22090,12251,378,0.936,0.031,IPO],
[C,'GO:1903561','extracellular vesi...','"Any vesicle that ...','3.29896E-64',404,22090,2133,169,0.418,0.079,RNH],
[C,'GO:0065010','extracellular me...','"Organized struc...','3.54082E-64',404,22090,2134,169,0.418,0.079,RNH],
[C,'GO:0043230','extracellular org...','"Organized struc...','3.54082E-64',404,22090,2134,169,0.418,0.079,RNH],
[C,'GO:0005829','cytosol','"The part of the c...','2.78749E-59',404,22090,5457,256,0.634,0.047,IPO],
[C,'GO:0031982','vesicle','"Any small, fluid–...','4.66591E-51',404,22090,3976,208,0.515,0.052,RNH],
[C,'GO:0005615','extracellular space','"That part of a m...','8.39273E-39',404,22090,3284,171,0.423,0.052,RNH],
[C,'GO:0043227','membrane–boun...','"Organized struc...','2.3039E-38',404,22090,15624,389,0.963,0.025,IPO],
[T,'TF:M10438_1','Factor: ZF5; moti...','Factor: ZF5; moti...','2.23137E-36',407,20011,15212,401,0.985,0.026,IPO],
[C,'GO:0005622','intracellular anat...','"A component of ...','4.29759E-33',404,22090,17772,402,0.995,0.023,IPO],
[T,'TF:M08526_1','Factor: E2F–3:HE...','Factor: E2F–3:HE...','1.2388E-32',407,20011,15329,399,0.98,0.026,IPO],
[C,'GO:0005576','extracellular regi...','"The space exter...','8.01214E-30',404,22090,4206,180,0.446,0.043,RNH],
[C,'GO:0043226','organelle','"Organized struc...','1.74387E-28',404,22090,16766,390,0.965,0.023,IPO],
[T,'TF:M00716_1','Factor: ZF5; moti...','Factor: ZF5; moti...','3.81344E-28',407,20011,14451,385,0.946,0.027,IPO],
[T,'TF:M11529_1','Factor: E2F–2; m...','Factor: E2F–2; m...','8.37093E-28',407,20011,14826,389,0.956,0.026,IPO],
['Gene Ontology Bi...','GO:0006996','organelle organi...','"A process that i...','1.59031E-27',398,21010,3562,164,0.412,0.046,'[RPL5, RNH1, SM...'],
[T,'TF:M10438','Factor: ZF5; moti...','Factor: ZF5; moti...','1.95872E-27',407,20011,16562,405,0.995,0.024,IPO],
[T,'TF:M11531','Factor: E2F–2; m...','Factor: E2F–2; m...','6.02762E-26',407,20011,13595,371,0.912,0.027,SL],
[T,'TF:M12599_1','Factor: E2F4; mot...','Factor: E2F4; mot...','1.92066E-25',407,20011,16020,399,0.98,0.025,SL],
[T,'TF:M09894_1','Factor: E2F–4; m...','Factor: E2F–4; m...','5.24579E-25',407,20011,14291,379,0.931,0.027,SL],
[T,'TF:M11531_1','Factor: E2F–2; m...','Factor: E2F–2; m...','1.40737E-24',407,20011,12643,355,0.872,0.028,SL],
['Gene Ontology M...','GO:0005515','protein binding','"Binding to a prot...','1.68589E-24',405,20139,14811,381,0.941,0.026,IPO],
[H,'HPA:0350000','pancreas','pancreas','2.28413E-24',339,11006,7400,310,0.914,0.042,IPO],
[T,'TF:M08525_1','Factor: E2F–1:HE...','Factor: E2F–1:HE...','1.2072E-23',407,20011,15607,393,0.966,0.025,IPO],
[H,'HPA:0310431','lymph node; ger...','lymph node; ger...','1.31999E-23',339,11006,5055,250,0.737,0.049,'[RPL5, IPO11, SL...'],
[T,'TF:M00803','Factor: E2F; motif...','Factor: E2F; motif...','1.57293E-23',407,20011,13497,366,0.899,0.027,SL]
];

function fillTable() {
  document.getElementById('rows').innerHTML = terms.map(r => {
    const cells = [r[0], '', ...r.slice(1)];
    return '<tr>' + cells.map((v, i) => `<td class="${i > 5 && i < 12 ? 'n' : 'c' + i}">${typeof v === 'string' ? v.replace(/E-/, 'E–') : v}</td>`).join('') + '</tr>';
  }).join('');
}

drawNetwork();
drawOverview();
fillTable();
```
